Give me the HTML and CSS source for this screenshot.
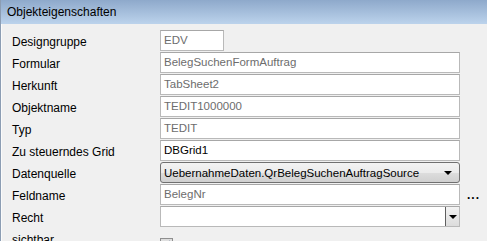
FILE: index.html
```html
<!DOCTYPE html>
<html lang="de">
<head>
    <meta charset="UTF-8" />
    <title>Objekteigenschaften</title>
    <link rel="stylesheet" href="styles.css">
</head>
<body>
    <div class="panel">
        <div class="title">Objekteigenschaften</div>

        <div class="props">
            <label>Designgruppe</label>
            <div class="field"><div class="edit short dim">EDV</div></div>

            <label>Formular</label>
            <div class="field"><div class="edit dim">BelegSuchenFormAuftrag</div></div>

            <label>Herkunft</label>
            <div class="field"><div class="edit dim">TabSheet2</div></div>

            <label>Objektname</label>
            <div class="field"><div class="edit dim">TEDIT1000000</div></div>

            <label>Typ</label>
            <div class="field"><div class="edit dim">TEDIT</div></div>

            <label>Zu steuerndes Grid</label>
            <div class="field"><div class="edit">DBGrid1</div></div>

            <label>Datenquelle</label>
            <div class="field">
                <div class="combo">
                    <span>UebernahmeDaten.QrBelegSuchenAuftragSource</span>
                    <span class="arrow"></span>
                </div>
            </div>

            <label>Feldname</label>
            <div class="field">
                <div class="edit dim">BelegNr</div>
                <span class="more">...</span>
            </div>

            <label>Recht</label>
            <div class="field">
                <div class="edit dropdown">
                    <span></span>
                    <span class="drop-btn"><span class="arrow"></span></span>
                </div>
            </div>

            <label>sichtbar</label>
            <div class="field"><span class="check">
                <svg width="9" height="9" viewBox="0 0 9 9"><path d="M1 5 L3.5 7.5 L8 1" stroke="#4a5f86" stroke-width="1.6" fill="none"/></svg>
            </span></div>
        </div>
    </div>
</body>
</html>
```

FILE: styles.css
```css
html, body {
    margin: 0;
    height: 100%;
    overflow: hidden;
}

body {
    font-family: "Liberation Sans", Arial, sans-serif;
    font-size: 12px;
    color: #000;
    background: #f0f0f0;
}

.panel {
    height: 100%;
    border-left: 1px solid #8c9db3;
    box-shadow: inset 1px 0 0 #fbfbfb;
}

.title {
    height: 24px;
    line-height: 24px;
    padding-left: 6px;
    font-size: 12px;
    color: #000;
    background: linear-gradient(#8ea9cb, #bcd3ec);
}

.props {
    display: grid;
    grid-template-columns: 148px 300px;
    grid-auto-rows: 21px;
    row-gap: 1px;
    padding: 6px 0 0 11px;
}

.props label {
    display: flex;
    align-items: center;
    padding-top: 2px;
}

.field {
    display: flex;
    align-items: center;
    position: relative;
    font-size: 11.5px;
}

.edit {
    box-sizing: border-box;
    width: 300px;
    height: 21px;
    line-height: 19px;
    padding: 0 3px;
    background: #fff;
    border: 1px solid #b9b9b9;
    border-top-color: #a7a7a7;
    white-space: nowrap;
}

.edit.short {
    width: 64px;
}

.dim {
    color: #6d6d6d;
}

.combo {
    box-sizing: border-box;
    width: 300px;
    height: 21px;
    display: flex;
    align-items: center;
    justify-content: space-between;
    padding: 0 5px 0 3px;
    border: 1px solid #707070;
    border-radius: 3px;
    background: linear-gradient(#f3f3f3 0%, #ebebeb 50%, #dddddd 51%, #d0d0d0 100%);
}

.arrow {
    width: 0;
    height: 0;
    border-left: 4px solid transparent;
    border-right: 4px solid transparent;
    border-top: 4px solid #000;
    margin-right: 2px;
}

.dropdown {
    display: flex;
    justify-content: space-between;
    padding-right: 0;
}

.drop-btn {
    width: 13px;
    display: flex;
    align-items: center;
    justify-content: center;
    border-left: 1px solid #5e5e5e;
    background: linear-gradient(#f3f3f3, #dcdcdc);
}

.drop-btn .arrow {
    margin-right: 0;
}

.more {
    position: absolute;
    left: 307px;
    top: 4px;
    font-size: 12px;
    font-weight: bold;
    letter-spacing: 1px;
}

.check {
    box-sizing: border-box;
    width: 13px;
    height: 13px;
    margin-top: 12px;
    border: 1px solid #8f8f8f;
    background: linear-gradient(#dcdcdc, #f4f4f4);
    display: flex;
    align-items: center;
    justify-content: center;
}
```
